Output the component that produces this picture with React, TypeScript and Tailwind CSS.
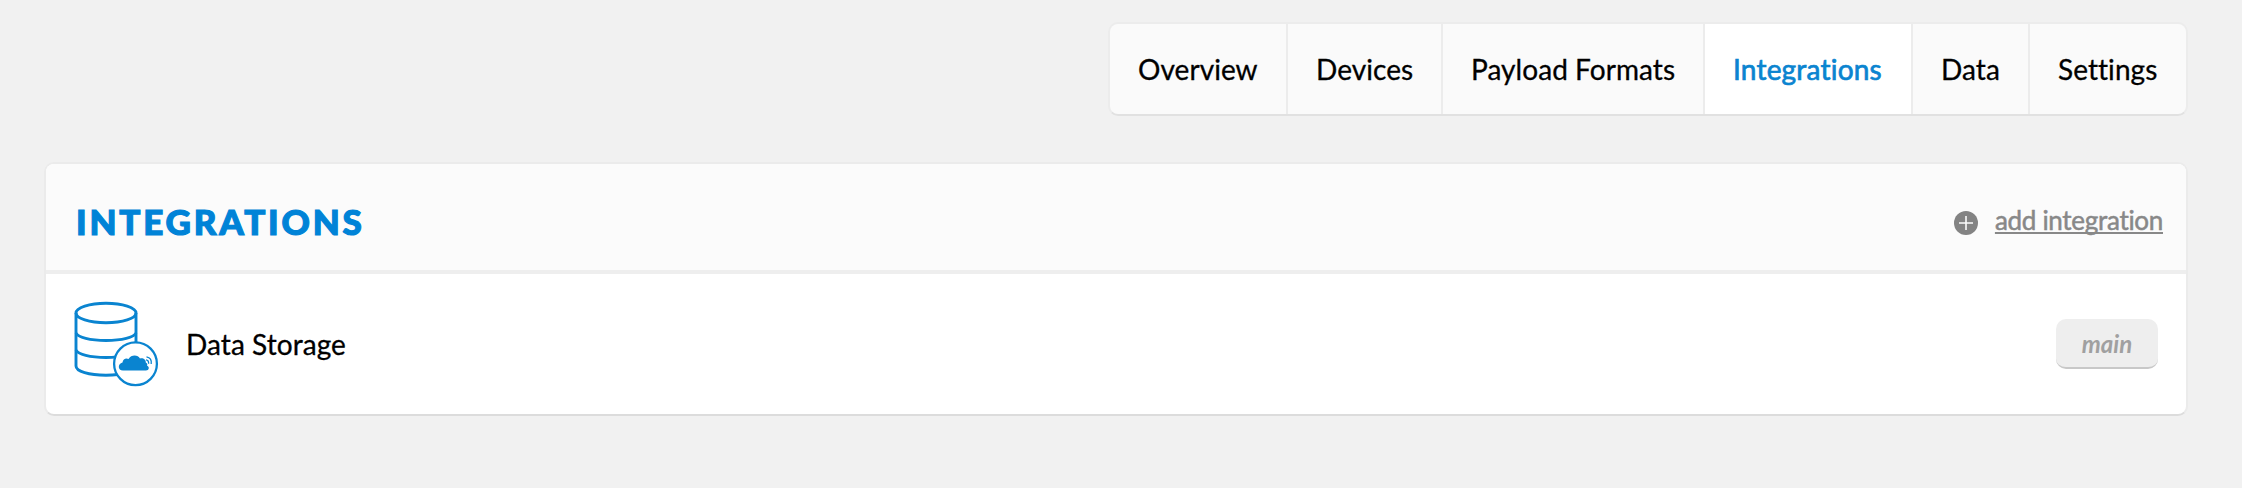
const tabs = [
  { label: "Overview", width: "w-[178px]" },
  { label: "Devices", width: "w-[155px]" },
  { label: "Payload Formats", width: "w-[262px]" },
  { label: "Integrations", width: "w-[208px]", active: true },
  { label: "Data", width: "w-[117px]" },
  { label: "Settings", width: "w-[156px]" },
];

function StorageIcon() {
  return (
    <svg width="86" height="88" viewBox="-1 -1 86 88" fill="none" stroke="#0a84d0" strokeWidth="2.9" className="mt-[2px] block shrink-0">
      <ellipse cx="31" cy="11" rx="30" ry="9.8" />
      <path d="M1 11V64C1 69.500 14 73.200 31 73.200S61 69.500 61 64V11" />
      <path d="M1 31C3 35.500 15 38.500 31 38.500S59 35.500 61 31" />
      <path d="M1 48C3 52.500 15 55.500 31 55.500S59 52.500 61 48" />
      <circle cx="60.500" cy="61.700" r="21.400" fill="#fff" strokeWidth="2.3" />
      <path
        d="M48 68.500C42.500 68.500 42.500 61.500 47.500 60.500C48 57 51 55.500 53.500 57C56 52.500 63 52.500 65 56.500C68 55.500 71 57.500 70.800 60.500C72.500 61.500 72.600 62.500 72 63.500C75 65 74 68.500 71 68.500Z"
        fill="#0a84d0"
        stroke="none"
      />
      <path d="M71 57.800C72.800 58 73.800 59.500 73.600 61.800M71.500 54.800C75 55.400 76.800 58 76.200 62" strokeWidth="1.3" />
    </svg>
  );
}

export default function App() {
  return (
    <div className="h-[488px] w-full bg-[#f1f1f1] pl-[44px] pr-[54px] pt-[22px] font-['Lato',sans-serif] text-[28px] tracking-[0.06px] text-black [-webkit-text-stroke:0.3px] [font-variant-ligatures:none]">
      <nav className="ml-auto flex h-[94px] w-[1080px] overflow-hidden rounded-[10px] border-2 border-[#ececec] border-b-[#e1e1e1] bg-[#fafafa]">
        {tabs.map((tab) => (
          <a
            key={tab.label}
            className={`flex shrink-0 items-center whitespace-nowrap border-[#ececec] pl-[28px] pb-px not-last:border-r-2 ${tab.width} ${
              tab.active ? "bg-white text-[#0a84d0] tracking-[0.2px] [-webkit-text-stroke:0.7px]" : ""
            }`}
          >
            {tab.label}
          </a>
        ))}
      </nav>

      <section className="mt-[46px] h-[254px] overflow-hidden rounded-[10px] border-2 border-[#ebebeb] border-b-[#dcdcdc] bg-white">
        <header className="flex h-[110px] items-center justify-between border-b-4 border-[#eeeeee] bg-[#fbfbfb] pl-[30px] pr-[23px]">
          <h1 className="pt-[9px] text-[35px] font-black leading-none tracking-[2.8px] text-[#0083d7] [-webkit-text-stroke:1.2px]">INTEGRATIONS</h1>
          <div className="flex items-center pt-[7px] text-[26px] tracking-[-0.3px] text-[#888888] [-webkit-text-stroke:0.5px]">
            <svg width="24" height="24" viewBox="0 0 24 24" className="mr-[17px] mt-[4px]">
              <circle cx="12" cy="12" r="12" fill="#838383" />
              <path d="M12 5V19M5 12H19" stroke="#fbfbfb" strokeWidth="1.6" />
            </svg>
            <a className="underline decoration-2 underline-offset-[2px] [text-decoration-skip-ink:none]">add integration</a>
          </div>
        </header>
        <div className="flex h-[140px] items-center pl-[28px] pr-[28px]">
          <StorageIcon />
          <span className="ml-[26px]">Data Storage</span>
          <span className="ml-auto flex h-[50px] w-[102px] items-center justify-center rounded-[10px] border-b-2 border-[#c8c8c8] bg-[#eeeeee] text-[24px] font-bold italic text-[#a0a0a0] [-webkit-text-stroke:0px]">
            <span className="pt-px">main</span>
          </span>
        </div>
      </section>
    </div>
  );
}
